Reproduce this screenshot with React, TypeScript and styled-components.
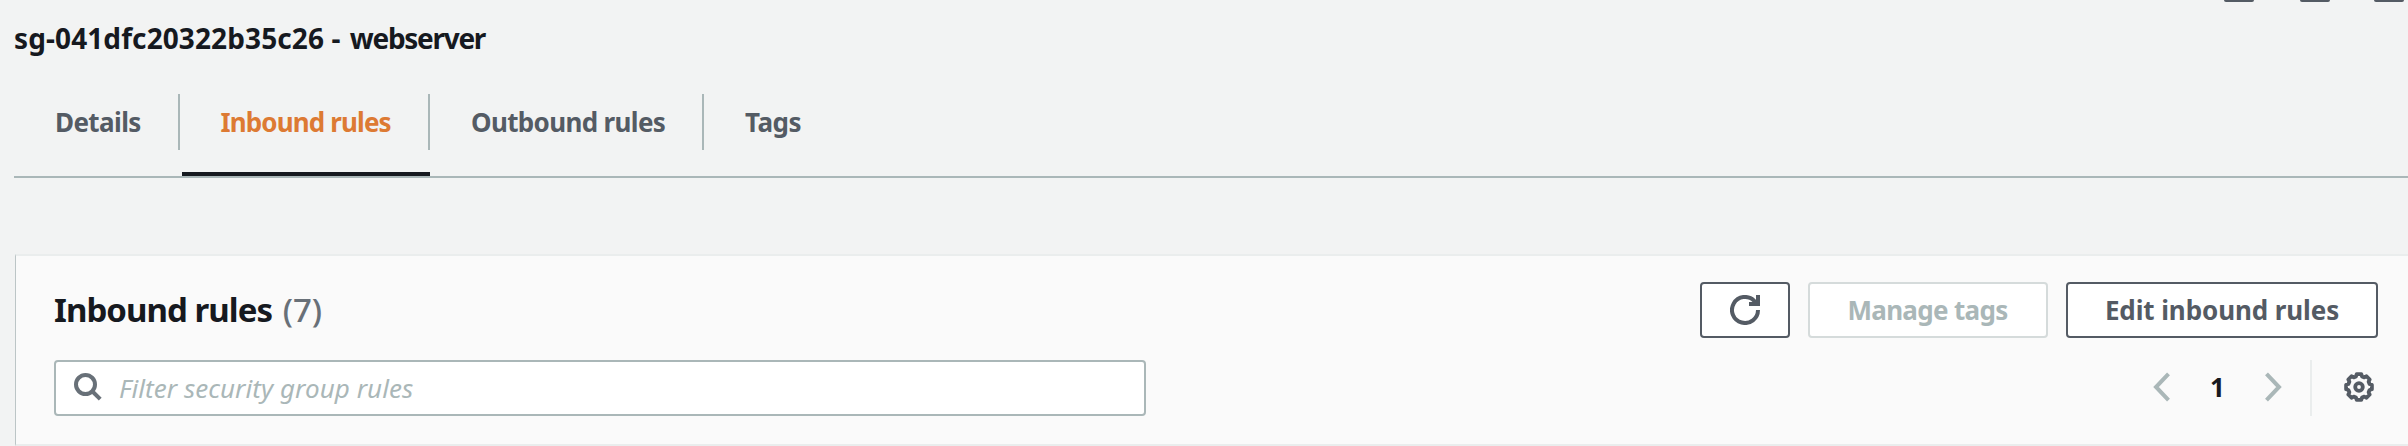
import React from 'react';
import styled, { createGlobalStyle } from 'styled-components';

const GlobalStyle = createGlobalStyle`
  * { box-sizing: border-box; }
  body {
    margin: 0;
    background: #f2f3f3;
    font-family: "Noto Sans", "Open Sans", sans-serif;
    overflow: hidden;
  }
`;

const Page = styled.main`
  display: flex;
  flex-direction: column;
  height: 446px;
  padding-left: 14px;
  overflow: hidden;
`;

const PaneControls = styled.div`
  display: flex;
  justify-content: flex-end;
  gap: 46px;
  height: 2px;
  padding-right: 4px;
`;

const PaneControl = styled.span`
  width: 30px;
  height: 2px;
  border-radius: 0 0 2px 2px;
  background: #545b64;

  &:last-child { margin-left: -2px; }
`;

const Title = styled.h1`
  margin: 16px 0 -1px;
  font-size: 28px;
  line-height: 40px;
  font-weight: 700;
  letter-spacing: 0.1px;
  color: #16191f;
`;

const GroupName = styled.span`
  margin-left: 2px;
  letter-spacing: -1.3px;
`;

const TabList = styled.nav`
  display: flex;
  align-items: flex-start;
  height: 121px;
  padding-top: 37px;
  border-bottom: 2px solid #aab7b8;
`;

const Tab = styled.a<{ $width: number; $indent: number; $spacing: number; $active?: boolean }>`
  display: flex;
  flex-direction: column;
  justify-content: space-between;
  width: ${p => p.$width}px;
  height: 82px;
  margin-left: ${p => (p.$active ? 2 : 0)}px;
  border-bottom: 4px solid ${p => (p.$active ? '#16191f' : 'transparent')};
  color: ${p => (p.$active ? '#dd7a33' : '#545b64')};

  span {
    height: 56px;
    padding-left: ${p => p.$indent}px;
    border-right: 2px solid #aab7b8;
    font-size: 26px;
    line-height: 56px;
    font-weight: 700;
    letter-spacing: ${p => p.$spacing}px;
    white-space: nowrap;
  }

  &:last-child span { border-right: 0; }
`;

const Panel = styled.section`
  display: flex;
  flex-direction: column;
  height: 192px;
  margin-top: 76px;
  margin-left: 1px;
  padding: 26px 30px 0 38px;
  background: #fafafa;
  border-left: 1px solid #bcc5c6;
  border-top: 2px solid #eaeded;
  border-bottom: 2px solid #eaeded;
`;

const PanelRow = styled.div`
  display: flex;
  justify-content: space-between;
  height: 56px;

  & + & { margin-top: 22px; }
`;

const Heading = styled.h2`
  margin: 0;
  font-size: 33px;
  line-height: 56px;
  font-weight: 700;
  letter-spacing: -0.95px;
  color: #16191f;
`;

const Count = styled.span`
  margin-left: 3px;
  font-weight: 500;
  letter-spacing: 0;
  color: #687078;
`;

const Actions = styled.div`
  display: flex;
  gap: 18px;
`;

const Button = styled.button<{ $width: number; $spacing?: number }>`
  display: flex;
  align-items: center;
  justify-content: center;
  width: ${p => p.$width}px;
  height: 56px;
  padding: 0;
  border: 2px solid #545b64;
  border-radius: 4px;
  background: #fff;
  color: #545b64;
  font: 700 26px/52px "Noto Sans", "Open Sans", sans-serif;
  letter-spacing: ${p => p.$spacing ?? 0}px;

  &:disabled {
    padding-right: 1px;
    border-color: #d5dbdb;
    color: #aab7b8;
  }
`;

const SearchBox = styled.label`
  display: flex;
  align-items: center;
  width: 1092px;
  height: 56px;
  padding-left: 18px;
  border: 2px solid #aab7b8;
  border-radius: 4px;
  background: #fff;
`;

const SearchInput = styled.input`
  flex: 1;
  height: 52px;
  margin-left: 17px;
  padding: 0;
  border: 0;
  outline: 0;
  background: transparent;
  font: italic 400 26px/52px "Noto Sans", "Open Sans", sans-serif;
  letter-spacing: 0.05px;

  &::placeholder { color: #aab7b8; opacity: 1; }
`;

const Pagination = styled.div`
  display: flex;
  align-items: center;
  height: 56px;
`;

const PageNumber = styled.span`
  width: 95px;
  padding-bottom: 3px;
  text-align: center;
  font-size: 26px;
  line-height: 52px;
  font-weight: 700;
  color: #16191f;
`;

const Divider = styled.span`
  width: 2px;
  height: 56px;
  margin: 0 32px 0 28px;
  background: #eaeded;
`;

const Icon = styled.svg`
  display: block;
  flex: none;
  fill: none;
  stroke: currentColor;
`;

const IconSlot = styled.span<{ $color: string; $end?: number }>`
  display: flex;
  margin-right: ${p => p.$end ?? 0}px;
  margin-bottom: 2px;
  color: ${p => p.$color};
`;

const SearchIcon = () => (
  <Icon width="28" height="28" viewBox="0 0 28 28" strokeWidth="4">
    <circle cx="11.5" cy="11.5" r="9.5" />
    <path d="M18 18l8.2 8.2" />
  </Icon>
);

const RefreshIcon = () => (
  <Icon width="30" height="30" viewBox="0 0 30 30" strokeWidth="4">
    <path d="M28 15A13 13 0 1 1 24.2 5.8L27 9" />
    <path d="M28 0v9H19" />
  </Icon>
);

const Chevron = ({ right }: { right?: boolean }) => (
  <Icon width="17" height="30" viewBox="0 0 17 30" strokeWidth="4">
    <path d={right ? 'M1.5 1.8L14 15 1.5 28.2' : 'M15.5 1.8L3 15l12.5 13.2'} />
  </Icon>
);

const polar = (angle: number, radius: number) => {
  const rad = (angle * Math.PI) / 180;
  return `${(15 + radius * Math.cos(rad)).toFixed(2)},${(15 + radius * Math.sin(rad)).toFixed(2)}`;
};

const gearOutline = Array.from({ length: 8 }, (_, tooth) => tooth * 45)
  .flatMap(a => [polar(a - 10, 13.1), polar(a + 10, 13.1), polar(a + 16, 11), polar(a + 29, 11)])
  .join(' ');

const GearIcon = () => (
  <Icon width="30" height="30" viewBox="0 0 30 30" strokeWidth="3.8">
    <polygon points={gearOutline} strokeLinejoin="round" />
    <circle cx="15" cy="15" r="3.8" />
  </Icon>
);

export default function App() {
  return (
    <>
      <GlobalStyle />
      <Page>
        <PaneControls>
          <PaneControl />
          <PaneControl />
          <PaneControl />
        </PaneControls>
        <Title>sg-041dfc20322b35c26 - <GroupName>webserver</GroupName></Title>
        <TabList>
          <Tab $width={166} $indent={41} $spacing={-0.6}><span>Details</span></Tab>
          <Tab $width={248} $indent={38.5} $spacing={-0.87} $active><span>Inbound rules</span></Tab>
          <Tab $width={274} $indent={41} $spacing={-0.65}><span>Outbound rules</span></Tab>
          <Tab $width={140} $indent={41} $spacing={-0.5}><span>Tags</span></Tab>
        </TabList>
        <Panel>
          <PanelRow>
            <Heading>Inbound rules <Count>(7)</Count></Heading>
            <Actions>
              <Button $width={90} aria-label="Refresh"><RefreshIcon /></Button>
              <Button $width={240} $spacing={-0.68} disabled>Manage tags</Button>
              <Button $width={312} $spacing={-0.1}>Edit inbound rules</Button>
            </Actions>
          </PanelRow>
          <PanelRow>
            <SearchBox>
              <IconSlot $color="#687078"><SearchIcon /></IconSlot>
              <SearchInput placeholder="Filter security group rules" />
            </SearchBox>
            <Pagination>
              <IconSlot $color="#aab7b8"><Chevron /></IconSlot>
              <PageNumber>1</PageNumber>
              <IconSlot $color="#aab7b8"><Chevron right /></IconSlot>
              <Divider />
              <IconSlot $color="#545b64" $end={4}><GearIcon /></IconSlot>
            </Pagination>
          </PanelRow>
        </Panel>
      </Page>
    </>
  );
}
